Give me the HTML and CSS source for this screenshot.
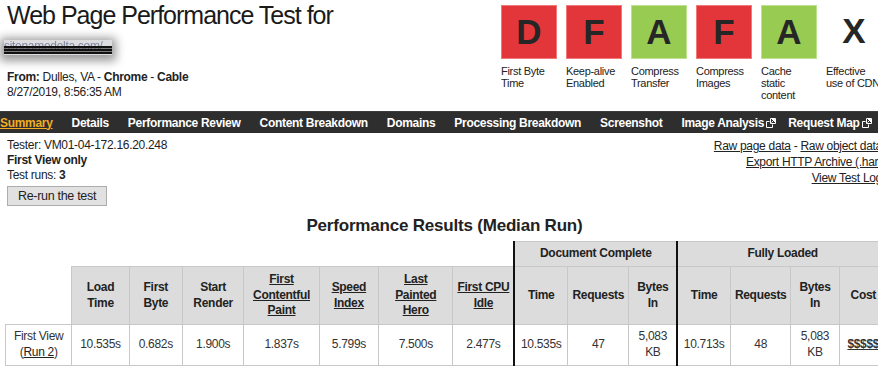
FILE: index.html
```html
<!DOCTYPE html>
<html lang="en">
<head>
    <meta charset="UTF-8">
    <meta name="viewport" content="width=device-width, initial-scale=1.0">
    <title>Web Page Performance Test</title>
    <link rel="stylesheet" href="styles.css">
</head>
<body>
    <div class="page">
        <header class="top">
            <div class="test-info">
                <h1>Web Page Performance Test for</h1>
                <div class="url"><span>sitenamedelta.com/</span></div>
                <p class="from"><b>From:</b> Dulles, VA - <b>Chrome</b> - <b>Cable</b></p>
                <p class="date">8/27/2019, 8:56:35 AM</p>
            </div>
            <ul class="grades">
                <li><div class="grade bad">D</div><span>First Byte<br>Time</span></li>
                <li><div class="grade bad">F</div><span>Keep-alive<br>Enabled</span></li>
                <li><div class="grade good">A</div><span>Compress<br>Transfer</span></li>
                <li><div class="grade bad">F</div><span>Compress<br>Images</span></li>
                <li><div class="grade good">A</div><span>Cache<br>static<br>content</span></li>
                <li><div class="grade">X</div><span>Effective<br>use of CDN</span></li>
            </ul>
        </header>

        <nav class="tabs">
            <a class="current" href="#">Summary</a>
            <a href="#">Details</a>
            <a href="#">Performance Review</a>
            <a href="#">Content Breakdown</a>
            <a href="#">Domains</a>
            <a href="#">Processing Breakdown</a>
            <a href="#">Screenshot</a>
            <a href="#">Image Analysis <svg class="ext" viewBox="0 0 10 10"><path d="M0.5 3.5h3M0.5 3.5v6h6v-3" /><path d="M4.5 0.5h5v5h-5z" /><path d="M5.5 4.5l3-3M6 1.5h2.5v2.5" /></svg></a>
            <a href="#">Request Map <svg class="ext" viewBox="0 0 10 10"><path d="M0.5 3.5h3M0.5 3.5v6h6v-3" /><path d="M4.5 0.5h5v5h-5z" /><path d="M5.5 4.5l3-3M6 1.5h2.5v2.5" /></svg></a>
        </nav>

        <section class="summary">
            <div class="meta">
                <div>Tester: VM01-04-172.16.20.248</div>
                <div><b>First View only</b></div>
                <div>Test runs: <b>3</b></div>
                <button>Re-run the test</button>
            </div>
            <div class="links">
                <div><a href="#">Raw page data</a> - <a href="#">Raw object data</a></div>
                <div><a href="#">Export HTTP Archive (.har)</a></div>
                <div><a href="#">View Test Log</a></div>
            </div>
        </section>

        <h2>Performance Results (Median Run)</h2>

        <table class="results">
            <colgroup>
                <col style="width:66px"><col style="width:57px"><col style="width:53px"><col style="width:61px">
                <col style="width:75px"><col style="width:59px"><col style="width:74px"><col style="width:61px">
                <col style="width:53px"><col style="width:61px"><col style="width:48px">
                <col style="width:53px"><col style="width:60px"><col style="width:48px"><col style="width:48px">
            </colgroup>
            <tr class="groups">
                <th class="blank" colspan="8"></th>
                <th class="split" colspan="3">Document Complete</th>
                <th class="split" colspan="4">Fully Loaded</th>
            </tr>
            <tr class="labels">
                <th class="blank"></th>
                <th>Load<br>Time</th>
                <th>First<br>Byte</th>
                <th>Start<br>Render</th>
                <th><a href="#">First<br>Contentful<br>Paint</a></th>
                <th><a href="#">Speed<br>Index</a></th>
                <th><a href="#">Last<br>Painted<br>Hero</a></th>
                <th><a href="#">First CPU<br>Idle</a></th>
                <th class="split">Time</th>
                <th>Requests</th>
                <th>Bytes<br>In</th>
                <th class="split">Time</th>
                <th>Requests</th>
                <th>Bytes<br>In</th>
                <th>Cost</th>
            </tr>
            <tr class="run">
                <td>First View<br>(<a href="#">Run 2</a>)</td>
                <td>10.535s</td>
                <td>0.682s</td>
                <td>1.900s</td>
                <td>1.837s</td>
                <td>5.799s</td>
                <td>7.500s</td>
                <td>2.477s</td>
                <td class="split">10.535s</td>
                <td>47</td>
                <td>5,083<br>KB</td>
                <td class="split">10.713s</td>
                <td>48</td>
                <td>5,083<br>KB</td>
                <td><a class="cost" href="#">$$$$$</a></td>
            </tr>
        </table>
    </div>
</body>
</html>
```

FILE: styles.css
```css
html, body {
    overflow: hidden;
}

body {
    margin: 0;
    font-family: 'Liberation Sans', Arial, sans-serif;
    font-size: 12px;
    letter-spacing: -0.3px;
    color: #222;
    background-color: #fff;
}

a {
    color: #222;
}

p {
    margin: 0;
}

.page {
    width: 890px;
    padding: 0 8px 0 7px;
    box-sizing: border-box;
}

/* header with the grades */

.top {
    display: flex;
    justify-content: space-between;
    align-items: flex-start;
    height: 111px;
}

h1 {
    margin: 1px 0 0;
    font-size: 25px;
    font-weight: normal;
    line-height: 28px;
    letter-spacing: -1px;
    color: #1a1a1a;
}

.url {
    position: relative;
    width: 108px;
    height: 15px;
    margin: 11px 0 0 -3px;
    box-shadow: 0 2px 10px 4px rgba(0, 0, 0, 0.4);
    background-color: rgba(120, 120, 130, 0.25);
    filter: blur(0.7px);
}

.url span {
    display: block;
    font-size: 12px;
    line-height: 12px;
    color: #8088a0;
    white-space: nowrap;
    overflow: hidden;
}

.url::after {
    content: '';
    position: absolute;
    left: 0;
    right: 0;
    top: 6px;
    height: 8px;
    background: repeating-linear-gradient(#111 0, #111 2px, rgba(40, 40, 40, 0.55) 2px, rgba(40, 40, 40, 0.55) 3px);
}

.from {
    margin-top: 15px;
    line-height: 15px;
}

.date {
    line-height: 15px;
}

.grades {
    display: flex;
    gap: 9px;
    list-style: none;
    margin: 5px 0 0;
    padding: 0;
}

.grades li {
    width: 56px;
}

.grade {
    height: 54px;
    box-sizing: border-box;
    font-size: 35px;
    font-weight: bold;
    line-height: 52px;
    text-align: center;
    color: #262626;
    letter-spacing: 0;
}

.grade.bad {
    background-color: #e3363a;
    border: 1px solid #f07a7a;
}

.grade.good {
    background-color: #98cb52;
    border: 1px solid #bde18e;
}

.grades span {
    display: block;
    margin-top: 6px;
    font-size: 11px;
    line-height: 12px;
    white-space: nowrap;
}

/* tab bar */

.tabs {
    display: flex;
    gap: 19px;
    height: 22px;
    margin-left: -7px;
    width: 900px;
    background-color: #2e2e2e;
    border-top: 1px solid #3c3c3c;
    box-sizing: border-box;
}

.tabs a {
    display: flex;
    align-items: center;
    gap: 2px;
    color: #fff;
    font-weight: bold;
    text-decoration: none;
    line-height: 20px;
    white-space: nowrap;
}

.tabs a.current {
    color: #f2ad22;
    text-decoration: underline;
}

.ext {
    width: 10px;
    height: 10px;
    margin-right: -7px;
    fill: none;
    stroke: #fff;
    stroke-width: 1;
}

/* test summary */

.summary {
    display: flex;
    justify-content: space-between;
    margin-top: 5px;
}

.meta {
    line-height: 15px;
}

.meta button {
    margin-top: 3px;
    height: 20px;
    width: 100px;
    padding: 0;
    font-family: inherit;
    font-size: 12.5px;
    letter-spacing: -0.3px;
    color: #222;
    background-color: #e1e1e1;
    border: 1px solid #adadad;
}

.links {
    text-align: right;
    line-height: 16px;
}

h2 {
    margin: 10px 0 5px;
    font-size: 17px;
    line-height: 20px;
    text-align: center;
    letter-spacing: -0.2px;
    color: #222;
}

/* results table */

.results {
    margin-left: -2px;
    border-collapse: collapse;
    table-layout: fixed;
    width: 883px;
    line-height: 15.6px;
    text-align: center;
}

.results th,
.results td {
    border: 1px solid #c8c8c8;
    padding: 0 2px;
    overflow: hidden;
}

.results th {
    background-color: #dcdcdc;
    font-weight: bold;
    font-size: 12px;
    color: #222;
}

.results th.blank {
    background: none;
    border: none;
}

.results td {
    color: #333;
}

.results .split {
    border-left: 2px solid #111;
}

.groups {
    height: 25px;
}

.labels {
    height: 58px;
}

.run {
    height: 41px;
}

.cost {
    font-weight: bold;
    color: #333;
}
```
